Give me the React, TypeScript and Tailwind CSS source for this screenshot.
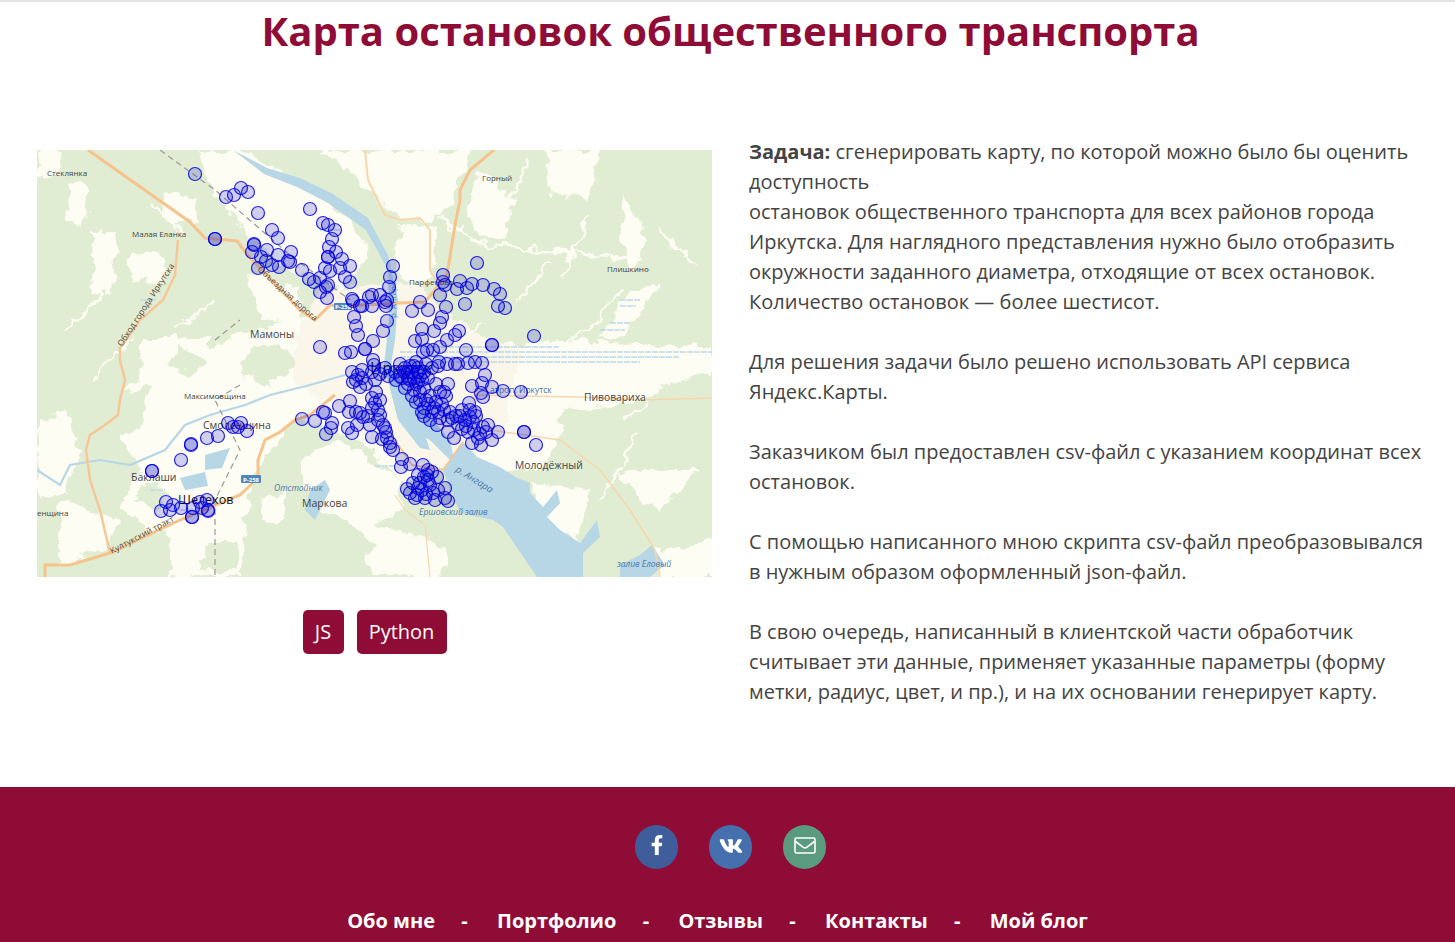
import { FaFacebookF, FaVk } from "react-icons/fa";

const stops: [number, number][] = [
  [195,174],[226,197],[234,195],[241,188],[248,192],[258,213],[310,209],[215,239],[215,239],[272,230],[278,238],[323,223],[328,225],[335,230],[332,239],[329,247],[336,252],[328,257],[328,257],[342,259],[350,266],[325,268],[330,271],[340,268],[345,277],[350,282],[254,244],[254,245],[252,252],[267,250],[261,257],[266,261],[272,265],[278,255],[279,267],[291,252],[290,262],[288,261],[302,270],[309,279],[314,282],[320,278],[328,285],[326,287],[320,292],[327,298],[258,268],[352,299],[353,301],[360,306],[354,317],[356,326],[358,335],[320,347],[345,353],[351,352],[365,349],[369,297],
  [477,263],[393,266],[390,277],[389,287],[443,275],[443,282],[445,285],[460,281],[457,289],[467,288],[472,284],[483,285],[494,289],[500,294],[498,306],[505,308],[440,295],[446,307],[465,304],[420,302],[428,310],[412,311],[442,317],[440,323],[434,331],[422,329],[459,331],[455,335],[447,340],[440,347],[433,350],[427,350],[423,352],[422,339],[415,341],[492,345],[492,345],[534,336],[466,350],[387,321],[383,331],[373,341],[365,349],[386,306],[385,302],[372,306],[362,306],[372,295],[380,295],[387,300],[439,362],[447,364],[455,364],[458,364],[468,363],[475,362],[482,363],[485,375],[373,360],
  [472,386],[482,383],[492,387],[503,391],[521,392],[483,397],[481,393],[469,403],[498,432],[524,432],[524,432],[536,445],[448,432],[454,438],[437,425],[472,443],[481,445],[492,440],[462,429],[468,432],[475,412],[473,422],[483,427],[478,438],[488,425],[470,417],[465,420],
  [407,489],[413,483],[418,475],[423,465],[428,470],[437,477],[445,488],[448,501],[445,498],[435,500],[425,498],[415,498],[410,493],[422,490],[428,480],[433,493],[427,475],[417,495],[430,485],[420,483],[424,477],[432,472],[418,488],[426,494],[438,490],
  [402,459],[410,464],[401,467],[393,450],[390,443],[383,425],[380,415],[375,403],[370,425],[372,437],[360,413],[382,439],[387,438],[376,392],[372,398],[378,410],[386,432],[375,380],[380,400],[372,408],[378,420],[368,416],[390,447],[385,428],
  [152,471],[152,471],[181,460],[191,444],[191,445],[207,438],[218,436],[228,423],[233,427],[241,423],[238,427],[247,431],[302,419],[315,421],[325,413],[332,423],[326,434],[339,406],[350,401],[349,412],[356,412],[348,428],[352,433],[357,425],[363,417],[323,412],[331,428],[353,382],[358,375],[360,387],
  [161,511],[166,502],[170,510],[173,505],[181,508],[192,517],[192,517],[193,508],[200,502],[207,500],[202,508],[208,511],[208,510],
  [352,372],[362,370],[374,365],[385,368],[395,372],[405,368],[414,366],[424,372],[432,368],[402,378],[410,380],[418,382],[428,378],[396,380],[405,388],[414,390],[424,388],[436,384],[412,396],[420,400],[430,396],[440,392],[424,408],[432,412],[442,404],[450,412],[456,416],[424,416],[430,420],[440,418],[448,420],[458,424],[416,362],[412,372],[420,376],[448,384],[444,392],[408,372],[400,364],[418,368],[436,402],[462,410],[446,396],
  [404,372],[408,378],[414,378],[418,372],[410,366],[400,376],[416,384],[422,380],[408,384],[420,392],[426,400],[416,402],[422,412],[428,404],[434,408],[438,412],[444,410],[452,418],[460,416],[466,426],[474,430],[480,434],[486,432],[476,416],[470,410],[362,378],[356,380],[366,384],[372,372],[380,374],[388,376],[426,364],[438,366],
];

const labels: { x: number; y: number; t: string; s?: number; c?: string; r?: number; i?: boolean }[] = [
  { x: 47, y: 176, t: "Стеклянка", s: 8 },
  { x: 132, y: 237, t: "Малая Еланка", s: 8 },
  { x: 250, y: 338, t: "Мамоны", s: 10.5 },
  { x: 482, y: 181, t: "Горный", s: 8 },
  { x: 607, y: 272, t: "Плишкино", s: 8 },
  { x: 409, y: 285, t: "Парфеново", s: 8 },
  { x: 184, y: 399, t: "Максимовщина", s: 8 },
  { x: 203, y: 429, t: "Смоленщина", s: 10.5 },
  { x: 131, y: 481, t: "Баклаши", s: 10.5 },
  { x: 178, y: 504, t: "Шелехов", s: 12.5, c: "#111" },
  { x: 37, y: 516, t: "енщина", s: 8 },
  { x: 302, y: 507, t: "Маркова", s: 10.5 },
  { x: 274, y: 491, t: "Отстойник", s: 8.5, c: "#4d76a8", i: true },
  { x: 584, y: 401, t: "Пивовариха", s: 10.3 },
  { x: 515, y: 469, t: "Молодёжный", s: 10.3 },
  { x: 419, y: 515, t: "Ершовский залив", s: 8.5, c: "#4d76a8", i: true },
  { x: 617, y: 567, t: "залив Еловый", s: 8.5, c: "#4d76a8", i: true },
  { x: 490, y: 393, t: "аэроп. Иркутск", s: 8.5, c: "#4d76a8" },
  { x: 370, y: 374, t: "Иркутск", s: 16, c: "#111" },
  { x: 455, y: 471, t: "р. Ангара", s: 9.5, c: "#4d76a8", i: true, r: 32 },
  { x: 122, y: 347, t: "Обход города Иркутска", s: 8.5, c: "#5a4a3a", r: -57 },
  { x: 257, y: 270, t: "Объездная дорога", s: 8.5, c: "#5a4a3a", r: 42 },
  { x: 112, y: 554, t: "Култукский тракт", s: 8.5, c: "#5a4a3a", r: -28 },
  { x: 396, y: 318, t: "р. Ангара", s: 8, c: "#4d76a8", r: -90 },
];

const white = [
  "M163 193L197 198L195 222L165 218Z",
  "M90 230L117 235L112 290L92 295Z",
  "M130 253L167 255L160 283L132 280Z",
  "M67 183L87 185L85 225L68 222Z",
  "M37 150L60 150L62 170L37 178Z",
  "M200 150H240L330 200L370 250L345 290L290 270L250 235L215 200Z",
  "M320 150L400 150L470 150L450 205L425 222L395 215L365 185Z",
  "M247 273L300 290L300 327L262 320Z",
  "M140 337L207 337L207 380L140 378Z",
  "M400 225L432 225L440 265L420 285L395 270Z",
  "M478 170L515 200L505 240L480 235L468 215Z",
  "M545 150L600 150L590 200L550 195Z",
  "M625 200L650 240L630 270L620 240Z",
  "M630 290L660 285L625 335L600 340Z",
  "M655 360L712 348L712 375L640 385L620 365Z",
  "M130 380L230 345L330 335L345 380L300 410L250 480L240 577L170 577L170 540L120 510L140 470L110 420Z",
  "M240 335L400 290L470 335L712 348L712 362L640 400L570 420L540 470L490 470L440 470L400 480L360 440L300 420L270 440L230 420L200 400L160 410L130 380Z",
  "M620 470L700 470L660 510L640 500Z",
  "M530 483L590 490L575 540L545 525Z",
  "M37 420L65 410L80 450L65 490L37 500Z",
  "M60 500L120 520L105 550L60 565Z",
  "M260 490L283 490L285 520L262 520Z",
  "M350 520L400 530L430 540L490 577L375 577Z",
  "M640 555L712 540L712 577L660 577Z",
  "M340 440L400 480L400 510L360 530L310 505L300 460Z",
  "M490 485L520 500L510 530L485 515Z",
];

const green = [
  "M258 480L280 455L295 470L290 490L262 500Z",
  "M310 540L345 520L375 545L350 577L305 577Z",
  "M450 525L490 540L520 577L440 577Z",
  "M250 350L280 345L300 365L270 385L240 375Z",
  "M105 395L150 385L140 430L105 440Z",
  "M480 320L530 295L565 340L490 345Z",
  "M180 345L205 360L190 375L170 365Z",
  "M145 480L170 490L155 510L135 500Z",
  "M205 545L235 540L235 570L200 570Z",
  "M560 410L625 405L620 465L570 470Z",
];

const clearings =
  "M175 330L215 300M90 380L130 340M100 300L115 250M440 215L470 240L540 250L640 260M545 250L570 255M460 340L520 300L550 260M620 290L590 330L550 345M590 215L560 280M150 200L190 240M65 330L100 300M530 160L500 220M660 230L695 265M600 440L650 400M640 430L600 500";

function MapView() {
  return (
    <svg viewBox="37 150 675 427" className="block h-[427px] w-[675px]" style={{ fontFamily: "'Open Sans', sans-serif" }}>
      <defs>
        <filter id="ragged" x="-5%" y="-5%" width="110%" height="110%">
          <feTurbulence type="fractalNoise" baseFrequency="0.07" numOctaves="3" seed="4" />
          <feDisplacementMap in="SourceGraphic" scale="16" xChannelSelector="R" yChannelSelector="G" />
          <feGaussianBlur stdDeviation="0.5" />
        </filter>
        <filter id="soft">
          <feGaussianBlur stdDeviation="0.5" />
        </filter>
        <filter id="ring">
          <feGaussianBlur stdDeviation="0.4" />
        </filter>
      </defs>
      <rect x="37" y="150" width="675" height="427" fill="#e1edd3" />
      <g filter="url(#ragged)">
        <g fill="#fefdf4">
          {white.map((d) => (
            <path key={d} d={d} />
          ))}
        </g>
        <path d={clearings} fill="none" stroke="#fefdf4" strokeWidth="2.5" />
        <g fill="#e1edd3">
          {green.map((d) => (
            <path key={d} d={d} />
          ))}
        </g>
        <path d="M320 290L410 280L470 330L520 350L510 400L500 440L440 470L400 460L340 410L290 380L300 330Z" fill="#faf7ea" />
      </g>
      <g filter="url(#soft)">
        {/* angara */}
        <path d="M233 150L267 168L300 178L333 194L368 218L388 255L398 300L395 340L391 365L413 400L430 450L420 448L398 420L384 365L389 320L388 270L366 230L328 203L297 187L264 174Z" fill="#b7d6e6" />
        <path d="M443 470L463 442L477 457L500 467L517 478L530 483L530 493L543 507L557 490L560 503L547 517L560 530L580 543L597 520L600 537L583 553L583 577L537 577L503 527L493 520L460 513Z" fill="#b7d6e6" />
        <path d="M398 380L450 440L455 465L430 440L410 430Z" fill="#b7d6e6" />
        {/* side rivers */}
        <path d="M37 470L60 485L70 465L100 460L130 465L165 450L185 425L210 415L245 405L270 395L310 385L345 375" fill="none" stroke="#b7d6e6" strokeWidth="2.2" />
        <path d="M205 455L230 448L222 468L205 470Z M180 478L205 472L208 486L185 490Z" fill="#b7d6e6" />
        <path d="M310 490L325 480L330 490L315 520L305 510Z" fill="#b7d6e6" />
        <path d="M620 565L640 555L652 545L665 565L650 577L620 577Z" fill="#b7d6e6" />
        {/* marsh stripes */}
        <path d="M400 352H712M400 357H680M400 362H640M420 347H560M620 300H640M620 306H636M600 330H625M610 323H630M635 270H650M140 300H155M142 306H150M375 466H395M320 230H340M180 510H210M150 490H165" stroke="#bcd8e8" strokeWidth="1.5" strokeDasharray="6 1" />
        {/* roads */}
        <path d="M88 150L190 222L205 238L237 241L250 258L262 270L300 310L315 320L330 305L345 306L400 303L425 302L447 275L455 225L460 200L460 190L470 170L494 150" fill="none" stroke="#f6c38c" strokeWidth="3" />
        <path d="M365 150L368 180L385 215L400 220L420 218L430 230L430 270L437 282" fill="none" stroke="#f8d6ac" strokeWidth="2" />
        <path d="M178 240L175 275L163 300L140 320L120 348L120 360L125 380L120 400L118 415L105 425L90 435L86 450L90 480L100 510L110 553" fill="none" stroke="#f6c796" strokeWidth="2.5" />
        <path d="M45 577L45 565L70 565L110 553L180 520L240 495L258 478L258 460L265 440L280 432L295 420L310 415L335 395" fill="none" stroke="#f6c38c" strokeWidth="3" />
        <path d="M395 440L412 465L443 470L463 442" fill="none" stroke="#f6c796" strokeWidth="2" />
        <path d="M470 395L580 397L640 400L712 398M490 430L560 440L600 470L630 510L655 550L660 577" fill="none" stroke="#f8d6ac" strokeWidth="1.5" />
        <path d="M395 495L405 510L425 525L430 577" fill="none" stroke="#f8d6ac" strokeWidth="1.2" />
        {/* rail */}
        <path d="M160 150L215 190L290 255L350 300M215 340L240 320M240 385L215 400L240 450L215 500L215 577" fill="none" stroke="#9a9a9a" strokeWidth="1.2" strokeDasharray="6 4" />
      </g>
      <rect x="334" y="303" width="18" height="7" rx="1" fill="#4f86bd" />
      <rect x="241" y="475" width="20" height="8" rx="1" fill="#4f86bd" />
      <text x="243" y="481.5" fontSize="6" fontWeight="700" fill="#fff">Р-258</text>
      <text x="335" y="309" fontSize="6" fontWeight="700" fill="#fff">Р-258</text>
      {labels.map((l) => (
        <text
          key={l.t + l.x}
          x={l.x}
          y={l.y}
          fontSize={l.s}
          fill={l.c ?? "#444"}
          fontStyle={l.i ? "italic" : undefined}
          transform={l.r ? `rotate(${l.r} ${l.x} ${l.y})` : undefined}
        >
          {l.t}
        </text>
      ))}
      <g filter="url(#ring)" fill="#0000c8" fillOpacity="0.18" stroke="#0000e6" strokeOpacity="0.85" strokeWidth="1.2">
        {stops.map(([x, y], i) => (
          <circle key={i} cx={x} cy={y} r="6.5" />
        ))}
      </g>
    </svg>
  );
}

const links = ["Обо мне", "Портфолио", "Отзывы", "Контакты", "Мой блог"];

export default function App() {
  return (
    <div className="flex h-[942px] flex-col overflow-hidden border-t-2 border-[#e3e3e3] bg-white font-['Open_Sans',sans-serif] text-[#444]">
      <h1 className="pl-[6px] text-center text-[40px] leading-[58px] font-bold text-[#8e0c36]">
        Карта остановок общественного транспорта
      </h1>
      <main className="mt-[90px] flex flex-1 items-start pl-[37px]">
        <div className="flex w-[675px] flex-col items-center">
          <MapView />
          <div className="mt-[33px] flex gap-[13px] text-[20px] text-white">
            <span className="flex h-[44px] w-[41px] items-center justify-center rounded-[5px] bg-[#8e0c36]">JS</span>
            <span className="flex h-[44px] w-[90px] items-center justify-center rounded-[5px] bg-[#8e0c36]">Python</span>
          </div>
        </div>
        <div className="-mt-[13px] ml-[37px] w-[680px] text-[20px] leading-[30px]">
          <p>
            <b>Задача:</b> сгенерировать карту, по которой можно было бы оценить доступность
            <br />
            остановок общественного транспорта для всех районов города Иркутска. Для наглядного представления нужно было отобразить окружности заданного диаметра, отходящие от всех остановок. Количество остановок — более шестисот.
          </p>
          <p className="mt-[30px]">Для решения задачи было решено использовать API сервиса Яндекс.Карты.</p>
          <p className="mt-[30px]">Заказчиком был предоставлен csv-файл с указанием координат всех остановок.</p>
          <p className="mt-[30px]">
            С помощью написанного мною скрипта csv-файл преобразовывался в нужным образом оформленный json-файл.
          </p>
          <p className="mt-[30px]">
            В свою очередь, написанный в клиентской части обработчик считывает эти данные, применяет указанные параметры (форму метки, радиус, цвет, и пр.), и на их основании генерирует карту.
          </p>
        </div>
      </main>
      <footer className="flex h-[155px] flex-col items-center bg-[#8e0c36] pt-[38px] text-white">
        <div className="flex gap-[31px] pl-[6px]">
          <span className="flex h-[44px] w-[43px] items-center justify-center rounded-full bg-[#3f5d9a] pb-[5px] text-[20px]">
            <FaFacebookF />
          </span>
          <span className="flex h-[44px] w-[43px] items-center justify-center rounded-full bg-[#4570ad] pb-[2px] text-[24px]">
            <FaVk />
          </span>
          <span className="flex h-[44px] w-[43px] items-center justify-center rounded-full bg-[#5a9a7e] pb-[3px]">
            <svg viewBox="0 0 22 17" className="h-[17px] w-[22px]" fill="none" stroke="#fff" strokeWidth="1.6" strokeLinejoin="round">
              <rect x="1" y="1" width="20" height="15" rx="1.5" />
              <path d="M1.5 4.5L9 10.2Q11 11.6 13 10.2L20.5 4.5" />
            </svg>
          </span>
        </div>
        <nav className="mt-[37px] mr-[20px] flex text-[20px] leading-[30px] font-bold">
          {links.map((l, i) => (
            <span key={l} className="flex">
              {i > 0 && <span className="w-[62px] pr-[3px] text-center">-</span>}
              {l}
            </span>
          ))}
        </nav>
      </footer>
    </div>
  );
}
